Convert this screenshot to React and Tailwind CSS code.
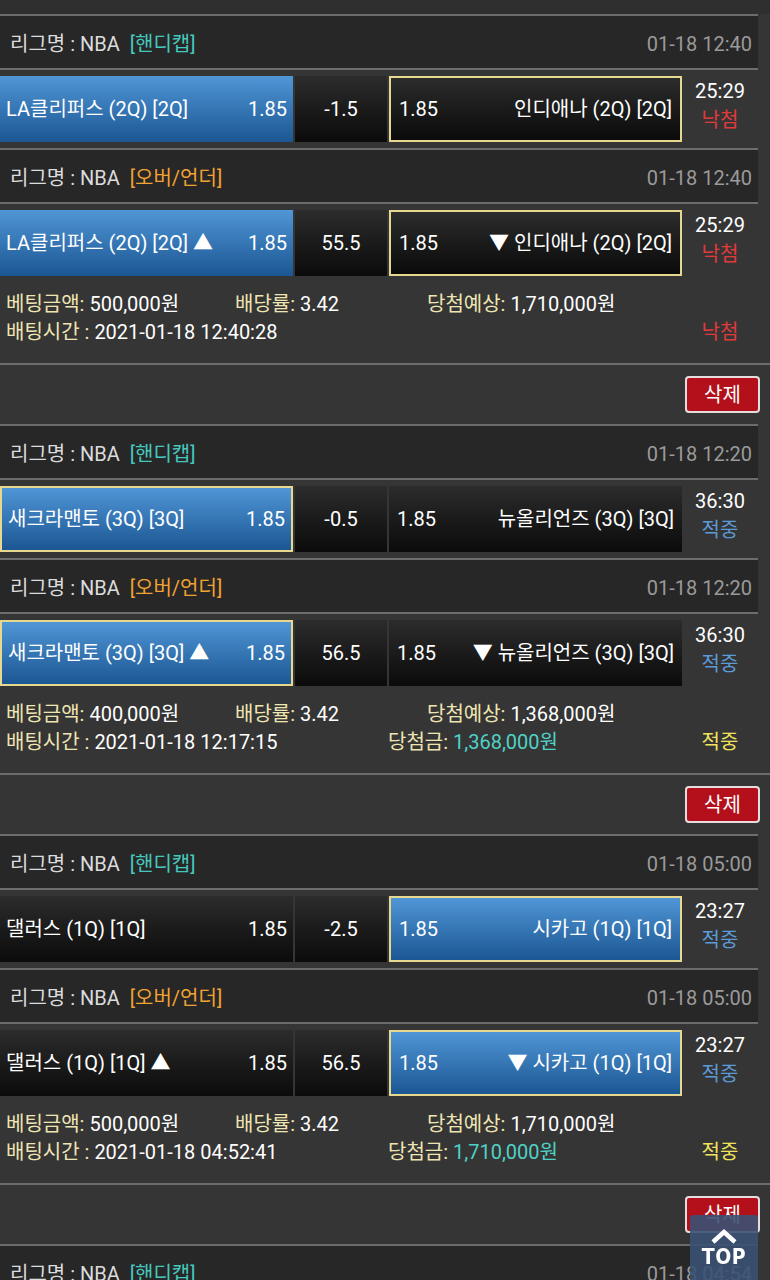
import React from 'react';

const blocks = [
  {
    date: '01-18 12:40',
    hcp: { home: 'LA클리퍼스 (2Q) [2Q]', line: '-1.5', away: '인디애나 (2Q) [2Q]' },
    ou: { home: 'LA클리퍼스 (2Q) [2Q] ▲', line: '55.5', away: '▼ 인디애나 (2Q) [2Q]' },
    homeStyle: 'blue',
    awayStyle: 'darkPick',
    time: '25:29',
    result: 'lose',
    amount: '500,000원',
    rate: '3.42',
    expect: '1,710,000원',
    betTime: '2021-01-18 12:40:28',
    won: null,
  },
  {
    date: '01-18 12:20',
    hcp: { home: '새크라맨토 (3Q) [3Q]', line: '-0.5', away: '뉴올리언즈 (3Q) [3Q]' },
    ou: { home: '새크라맨토 (3Q) [3Q] ▲', line: '56.5', away: '▼ 뉴올리언즈 (3Q) [3Q]' },
    homeStyle: 'bluePick',
    awayStyle: 'dark',
    time: '36:30',
    result: 'win',
    amount: '400,000원',
    rate: '3.42',
    expect: '1,368,000원',
    betTime: '2021-01-18 12:17:15',
    won: '1,368,000원',
  },
  {
    date: '01-18 05:00',
    hcp: { home: '댈러스 (1Q) [1Q]', line: '-2.5', away: '시카고 (1Q) [1Q]' },
    ou: { home: '댈러스 (1Q) [1Q] ▲', line: '56.5', away: '▼ 시카고 (1Q) [1Q]' },
    homeStyle: 'dark',
    awayStyle: 'bluePick',
    time: '23:27',
    result: 'win',
    amount: '500,000원',
    rate: '3.42',
    expect: '1,710,000원',
    betTime: '2021-01-18 04:52:41',
    won: '1,710,000원',
  },
];

const boxClass = {
  blue: 'bg-gradient-to-b from-[#5096d6] to-[#1b5793]',
  bluePick: 'bg-gradient-to-b from-[#5096d6] to-[#1b5793] border-2 border-[#e6d98f]',
  dark: 'bg-gradient-to-b from-[#2c2c2c] to-[#0b0b0b]',
  darkPick: 'bg-gradient-to-b from-[#2c2c2c] to-[#0b0b0b] border-2 border-[#e6d98f]',
};

const Line = ({ full }) => (
  <div className={`h-[2px] bg-[#6c6c6c] ${full ? 'w-full' : 'w-[758px]'}`} />
);

const LeagueHeader = ({ type, date }) => (
  <div className="w-[758px] h-[52px] bg-[#272727] flex items-center justify-between pl-[10px] pr-[6px] pt-[4px]">
    <div className="text-[#dcdcdc]">
      리그명 : NBA
      {type === 'hcp' ? (
        <span className="ml-[10px] text-[#45c8bd]">[핸디캡]</span>
      ) : (
        <span className="ml-[10px] text-[#f0a232]">[오버/언더]</span>
      )}
    </div>
    <div className="text-[#9a9a9a]">{date}</div>
  </div>
);

const MatchRow = ({ match, homeStyle, awayStyle, time, result }) => (
  <div className="w-[758px] h-[78px] flex items-center">
    <div className={`w-[293px] h-[66px] flex items-center justify-between px-[6px] text-white ${boxClass[homeStyle]}`}>
      <span>{match.home}</span>
      <span>1.85</span>
    </div>
    <div className={`ml-[2px] w-[92px] h-[66px] flex items-center justify-center text-white ${boxClass.dark}`}>
      {match.line}
    </div>
    <div className={`ml-[2px] w-[293px] h-[66px] flex items-center justify-between pl-[8px] pr-[8px] text-white ${boxClass[awayStyle]}`}>
      <span>1.85</span>
      <span>{match.away}</span>
    </div>
    <div className="w-[76px] h-[66px] flex flex-col items-center justify-center leading-[29px] pb-[6px]">
      <span className="text-white">{time}</span>
      {result === 'win' ? (
        <span className="text-[#5b9bd8]">적중</span>
      ) : (
        <span className="text-[#e03a3a]">낙첨</span>
      )}
    </div>
  </div>
);

const BetBlock = ({ b }) => (
  <div>
    <Line />
    <LeagueHeader type="hcp" date={b.date} />
    <Line />
    <MatchRow match={b.hcp} homeStyle={b.homeStyle} awayStyle={b.awayStyle} time={b.time} result={b.result} />
    <Line />
    <LeagueHeader type="ou" date={b.date} />
    <Line />
    <MatchRow match={b.ou} homeStyle={b.homeStyle} awayStyle={b.awayStyle} time={b.time} result={b.result} />
    <div className="h-[81px] pt-[8px] leading-[28px]">
      <div className="flex pl-[6px]">
        <div className="w-[229px]">
          <span className="text-[#efe5b3]">베팅금액:</span> <span className="text-white">{b.amount}</span>
        </div>
        <div className="w-[192px]">
          <span className="text-[#efe5b3]">배당률:</span> <span className="text-white">{b.rate}</span>
        </div>
        <div>
          <span className="text-[#efe5b3]">당첨예상:</span> <span className="text-white">{b.expect}</span>
        </div>
      </div>
      <div className="flex w-[758px] pl-[6px]">
        <div className="w-[382px]">
          <span className="text-[#efe5b3]">배팅시간 :</span> <span className="text-white">{b.betTime}</span>
        </div>
        <div className="flex-1">
          {b.won && (
            <>
              <span className="text-[#efe5b3]">당첨금:</span> <span className="text-[#4fd2c6]">{b.won}</span>
            </>
          )}
        </div>
        <div className="w-[76px] text-center">
          {b.result === 'win' ? (
            <span className="text-[#f2e35c]">적중</span>
          ) : (
            <span className="text-[#e03a3a]">낙첨</span>
          )}
        </div>
      </div>
    </div>
    <Line full />
    <div className="h-[59px] flex items-start justify-end pt-[11px] pr-[10px]">
      <button className="w-[75px] h-[37px] rounded-[4px] border-2 border-[#e4dede] bg-[#b3101c] text-white flex items-center justify-center">
        삭제
      </button>
    </div>
  </div>
);

export default function App() {
  return (
    <div className="relative w-[770px] h-[1280px] overflow-hidden bg-[#353535] text-[20px] font-[Roboto,'Noto_Sans_CJK_KR',sans-serif]">
      <div className="h-[14px] bg-[#2f2f2f]" />
      {blocks.map((b, i) => (
        <BetBlock key={i} b={b} />
      ))}
      <Line />
      <LeagueHeader type="hcp" date="01-18 04:54" />

      <button className="fixed right-[12px] bottom-0 w-[68px] h-[65px] rounded-t-[3px] bg-[#3b5274]/90 flex flex-col items-center justify-center text-white">
        <svg width="28" height="16" viewBox="0 0 28 16" className="mb-[2px]">
          <path d="M3 14 L14 4 L25 14" fill="none" stroke="white" strokeWidth="4.5" strokeLinejoin="miter" />
        </svg>
        <span className="font-['DejaVu_Sans_Condensed',sans-serif] font-bold text-[21px] leading-[22px] tracking-[0.5px]">TOP</span>
      </button>
    </div>
  );
}
